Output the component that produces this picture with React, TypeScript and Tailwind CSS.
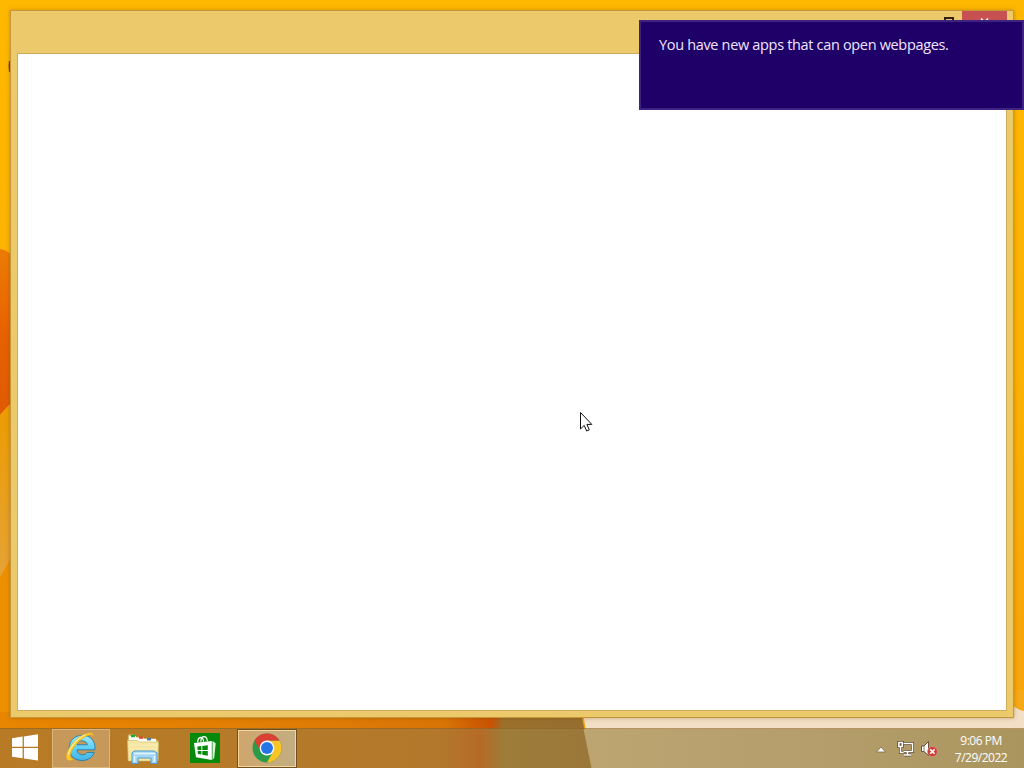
function Wallpaper() {
    return (
        <svg className="absolute inset-0 h-full w-full" viewBox="0 0 1024 768">
            <defs>
                <linearGradient id="sky" x1="0" y1="0" x2="0" y2="1">
                    <stop offset="0" stopColor="#ffb800" />
                    <stop offset="0.5" stopColor="#fbb104" />
                    <stop offset="1" stopColor="#f6a10c" />
                </linearGradient>
                <linearGradient id="blob" x1="0" y1="0" x2="0" y2="1">
                    <stop offset="0" stopColor="#ec7c04" />
                    <stop offset="0.5" stopColor="#e86203" />
                    <stop offset="1" stopColor="#df5a04" />
                </linearGradient>
                <linearGradient id="haze" x1="0" y1="0" x2="0" y2="1">
                    <stop offset="0" stopColor="#ec9c00" />
                    <stop offset="1" stopColor="#e5a236" />
                </linearGradient>
                <linearGradient id="ground" x1="0" y1="0" x2="1" y2="0">
                    <stop offset="0" stopColor="#e88600" />
                    <stop offset="0.5" stopColor="#e07d05" />
                    <stop offset="0.75" stopColor="#d87405" />
                    <stop offset="0.83" stopColor="#c95203" />
                    <stop offset="0.85" stopColor="#9a702a" />
                    <stop offset="1" stopColor="#966e30" />
                </linearGradient>
            </defs>
            <rect width="1024" height="768" fill="url(#sky)" />
            {/* left edge shapes */}
            <path d="M0 249 Q8 250 12 256 V402 L0 415 Z" fill="url(#blob)" />
            <path d="M0 415 L12 402 V556 L0 577 Z" fill="url(#haze)" />
            <path d="M0 577 L12 556 V768 H0 Z" fill="#ec9000" />
            {/* bottom strip */}
            <path d="M0 712 H581 L592 768 H0 Z" fill="url(#ground)" />
            <path d="M581 700 H1024 V768 H592 Z" fill="#f3dfc5" />
            <path d="M1010 690 H1024 V711 Q1017 710 1010 703 Z" fill="#f6a916" />
            <path d="M9 61 h2 v11 h-2 q-1 -6 0 -11" fill="#713c12" />
        </svg>
    );
}

function StartLogo() {
    return (
        <svg className="h-[27px] w-[28px]" viewBox="0 0 28 27" fill="#fff">
            <path d="M1 4.3 L11.6 2.6 V12.8 H1 Z M12.9 2.4 L27 0.3 V12.8 H12.9 Z M1 14.1 H11.6 V24.3 L1 22.7 Z M12.9 14.1 H27 V26.5 L12.9 24.5 Z" />
        </svg>
    );
}

function ExplorerE() {
    return (
        <svg className="h-[32px] w-[32px]" viewBox="0 0 32 32">
            <defs>
                <linearGradient id="ieBlue" x1="0" y1="0" x2="0" y2="1">
                    <stop offset="0" stopColor="#9cecfc" />
                    <stop offset="0.5" stopColor="#5fd0f5" />
                    <stop offset="1" stopColor="#45b4e6" />
                </linearGradient>
            </defs>
            <path
                d="M30 18.8 H12 C12.3 24.2 20 25.4 22 21.4 H29.2 C26.8 27.8 20.8 30.2 15.2 29.4 C8.4 28.5 3.8 23.6 4.1 17 C4.4 9.4 9.8 4.3 17.3 4.3 C25.5 4.3 30.6 9.8 30 18.8 Z M12 13.8 H22.3 C22 8.6 12.8 8.4 12 13.8 Z"
                fill="url(#ieBlue)"
                stroke="#1f7dae"
                strokeWidth="0.9"
                fillRule="evenodd"
            />
            {/* orbit ring */}
            <path
                d="M28.5 6.5 C29.6 0.8 24 0.2 17 4.2 C7.5 9.8 0.8 20.3 1.2 26.3 C1.4 30 5 30.6 9 28.2 C5.2 28 4.4 25 6.8 20 C10.5 12.6 18.4 5.8 24 4 C26.6 3.2 28 4 28.5 6.5 Z"
                fill="#fbcb2c"
                stroke="#d19a22"
                strokeWidth="0.4"
            />
            <path d="M3 23.5 C4.8 16 12 7.6 20 3.8" fill="none" stroke="#ffec8e" strokeWidth="1.2" />
        </svg>
    );
}

function FolderIcon() {
    return (
        <svg className="h-[32px] w-[34px]" viewBox="0 0 34 32">
            <path d="M2 5 V2.5 Q2 1.5 3 1.5 H8 L10 4 H15 L17 5.5 H24 L26 7 H31 Q32.4 7 32.4 9 V27.5 H2 Z" fill="#e4c878" stroke="#b39b51" strokeWidth="0.7" />
            <path d="M3 3 H10 V4.5 H17.5 V5.8 H30 V10 H3 Z" fill="#fffdf0" />
            <rect x="5" y="1.8" width="4" height="2.4" fill="#18a83c" />
            <rect x="13" y="3.4" width="4" height="2.4" fill="#d94b32" />
            <rect x="21" y="5" width="4" height="2.4" fill="#427fb8" />
            <path d="M1.5 7.5 H11 L14 9 H32.5 L31.7 28 H2.3 Z" fill="#f5e6a2" stroke="#cdb86e" strokeWidth="0.6" />
            <path d="M3 12 H31.5 M3 16 H31" stroke="#fbeeb5" strokeWidth="1.2" />
            {/* blue stand */}
            <path d="M6 20 L8 18 H28 L31 20 V30.5 H25 V25 H12 V30.5 H6 Z" fill="#a5d7f5" stroke="#4f9bd2" strokeWidth="1" />
            <path d="M8 20.5 H29 M8.5 23 V29 M28.5 23 V29" stroke="#e1f5ff" strokeWidth="1.5" />
        </svg>
    );
}

function StoreIcon() {
    return (
        <svg className="h-[30px] w-[30px]" viewBox="0 0 30 30">
            <rect width="30" height="30" fill="#078a0b" />
            <path d="M7.8 9.5 V8 Q8 4.6 10.6 4.3 Q13.2 4.3 13.6 8.8 M10.8 8.8 Q11 3.6 14 3.6 Q17 3.6 17.4 8.2" fill="none" stroke="#fff" strokeWidth="1.2" />
            <path d="M4 10 L21.8 8 V27 L6 24.3 Z" fill="#fff" />
            <path d="M22.5 8 L25.7 10.2 L24.2 24.8 L22.5 27 Z" fill="#e2f2de" />
            <path d="M7.3 13.5 L11.4 13 V17 H7.6 Z M12.3 12.9 L17.8 12.2 V17 H12.3 Z M7.6 18 H11.4 V21.6 L7.9 21 Z M12.3 18 H17.8 V22.7 L12.3 21.8 Z" fill="#078a0b" />
        </svg>
    );
}

function ChromeIcon() {
    return (
        <svg className="h-[30px] w-[30px]" viewBox="0 0 30 30">
            <circle cx="15" cy="15" r="14.5" fill="#2c9b49" />
            <path d="M2.4 7.8 A14.5 14.5 0 0 1 27.6 7.8 H15 A7.2 7.2 0 0 0 8.8 18.6 Z" fill="#dc3f34" />
            <path d="M27.6 7.8 A14.5 14.5 0 0 1 15 29.5 L21.2 18.6 A7.2 7.2 0 0 0 15 7.8 Z" fill="#f9c525" />
            <circle cx="15" cy="15" r="7.4" fill="#fff" />
            <circle cx="15" cy="15" r="6" fill="#2674e5" />
        </svg>
    );
}

function TrayIcons() {
    return (
        <div className="flex items-center">
            <svg className="h-[18px] w-[12px]" viewBox="0 0 12 18">
                <path d="M1.5 12 L6 7 L10.5 12 Z" fill="#fff" stroke="#806b48" strokeWidth="0.8" />
            </svg>
            {/* network */}
            <svg className="ml-[10px] h-[18px] w-[18px]" viewBox="0 0 18 18" fill="none">
                <path d="M6.5 3.5 H15.5 V11.5 H6.5 M10.5 12 V14.5 M7 15 H14 M3.5 7 V12.5 H6.5 M1.8 2.5 H5.2 V6.5 H1.8 Z" stroke="#5d4630" strokeWidth="3" />
                <path d="M6.5 3.5 H15.5 V11.5 H6.5 M10.5 12 V14.5 M7 15 H14 M3.5 7 V12.5 H6.5 M1.8 2.5 H5.2 V6.5 H1.8 Z" stroke="#fff" strokeWidth="1.5" />
            </svg>
            {/* muted speaker */}
            <svg className="ml-[5px] h-[18px] w-[19px]" viewBox="0 0 19 18">
                <path d="M1.5 6 H4 L8.5 1.5 V15.5 L4 11.5 H1.5 Z" fill="#fff" stroke="#5d4630" strokeWidth="0.9" />
                <path d="M4 6 V11.5" stroke="#776044" strokeWidth="0.8" />
                <circle cx="12.4" cy="11.6" r="5" fill="#cb3c35" stroke="#e9a092" strokeWidth="0.6" />
                <path d="M10.2 9.4 L14.6 13.8 M14.6 9.4 L10.2 13.8" stroke="#fff" strokeWidth="1.6" />
            </svg>
        </div>
    );
}

function Taskbar() {
    return (
        <div className="relative flex h-10 items-center border-t border-[#8c6022]/60 bg-[linear-gradient(90deg,#b87a25_0px,#b57b28_240px,#b3782b_440px,#b56b27_480px,#9d7d38_505px,#9b783a_580px,transparent_580px)]">
            <svg className="absolute inset-0 -z-10 h-[39px] w-full" viewBox="0 0 1024 39" preserveAspectRatio="none">
                <defs>
                    <linearGradient id="barRight" x1="0" y1="0" x2="1" y2="0">
                        <stop offset="0" stopColor="#bca571" />
                        <stop offset="0.5" stopColor="#b59e6c" />
                        <stop offset="1" stopColor="#aa955e" />
                    </linearGradient>
                </defs>
                <path d="M579 0 H1024 V39 H579 Z" fill="url(#barRight)" />
                <path d="M579 0 H583.5 L591.5 39 H579 Z" fill="#9b783a" />
            </svg>
            <div className="flex w-[52px] justify-center pb-[2px] pr-[2px]">
                <StartLogo />
            </div>
            <div className="flex h-[39px] w-[58px] items-center justify-center border border-[#dab57b] bg-[#c6995a] pb-[3px]">
                <ExplorerE />
            </div>
            <div className="ml-4 flex w-[34px] justify-center">
                <FolderIcon />
            </div>
            <div className="ml-[30px] pb-[2px]">
                <StoreIcon />
            </div>
            <div className="ml-[17px] flex h-[39px] w-[60px] items-center justify-center border border-[#705022] bg-[#c7aa78]">
                <div className="flex h-[37px] w-[58px] items-center justify-center border border-[#f3d798] bg-linear-to-r from-[#cfa66e] to-[#c2ad81] pb-[2px]">
                    <ChromeIcon />
                </div>
            </div>
            <div className="ml-auto flex items-center">
                <TrayIcons />
                <div className="ml-[10px] mr-[11px] w-[64px] text-center text-[12px] leading-[17px] tracking-[-0.5px] text-white">
                    <div>9:06 PM</div>
                    <div>7/29/2022</div>
                </div>
            </div>
        </div>
    );
}

function AppWindow() {
    return (
        <div className="absolute left-[10px] top-[10px] flex h-[708px] w-[1004px] flex-col border border-[#c6963c] bg-[#ecca6b] px-[6px] pb-[6px] shadow-[0_0_4px_rgba(120,70,0,0.4)]">
            <div className="flex h-[42px] items-start justify-end">
                <svg className="mr-[8px] mt-[6px] h-[10px] w-[10px]" viewBox="0 0 10 10">
                    <rect x="1" y="1" width="8" height="7" fill="none" stroke="#352018" strokeWidth="2" />
                </svg>
                <div className="flex h-5 w-[45px] justify-center bg-[#c75050] pt-[7px]">
                    <svg className="h-[8px] w-[9px]" viewBox="0 0 9 8">
                        <path d="M1 0.5 L8 7.5 M8 0.5 L1 7.5" stroke="#fff" strokeWidth="1.6" />
                    </svg>
                </div>
            </div>
            <div className="flex-1 border border-[#cfac5b] bg-white" />
        </div>
    );
}

function Toast() {
    return (
        <div className="absolute left-[639px] top-[20px] h-[90px] w-[385px] border-2 border-[#3e2480] bg-[#1f0068] px-[18px] pt-[12px]">
            <p className="whitespace-nowrap text-[14.5px] leading-[22px] tracking-[-0.33px] text-[#eee6ff]">
                You have new apps that can open webpages.
            </p>
        </div>
    );
}

function App() {
    return (
        <div className="relative isolate flex h-[768px] w-[1024px] flex-col justify-end overflow-hidden font-['Open_Sans','Noto_Sans',sans-serif]">
            <div className="absolute inset-0 -z-20">
                <Wallpaper />
            </div>
            <AppWindow />
            <Toast />
            <Taskbar />
            {/* mouse pointer */}
            <svg className="absolute left-[580px] top-[412px] h-[20px] w-[13px]" viewBox="0 0 13 20">
                <path d="M0.5 0.5 V17 L4.2 13.4 L6.7 19 L9.3 17.9 L6.9 12.4 H11.8 Z" fill="#fff" stroke="#111" strokeWidth="1" />
            </svg>
        </div>
    );
}

export default App;
